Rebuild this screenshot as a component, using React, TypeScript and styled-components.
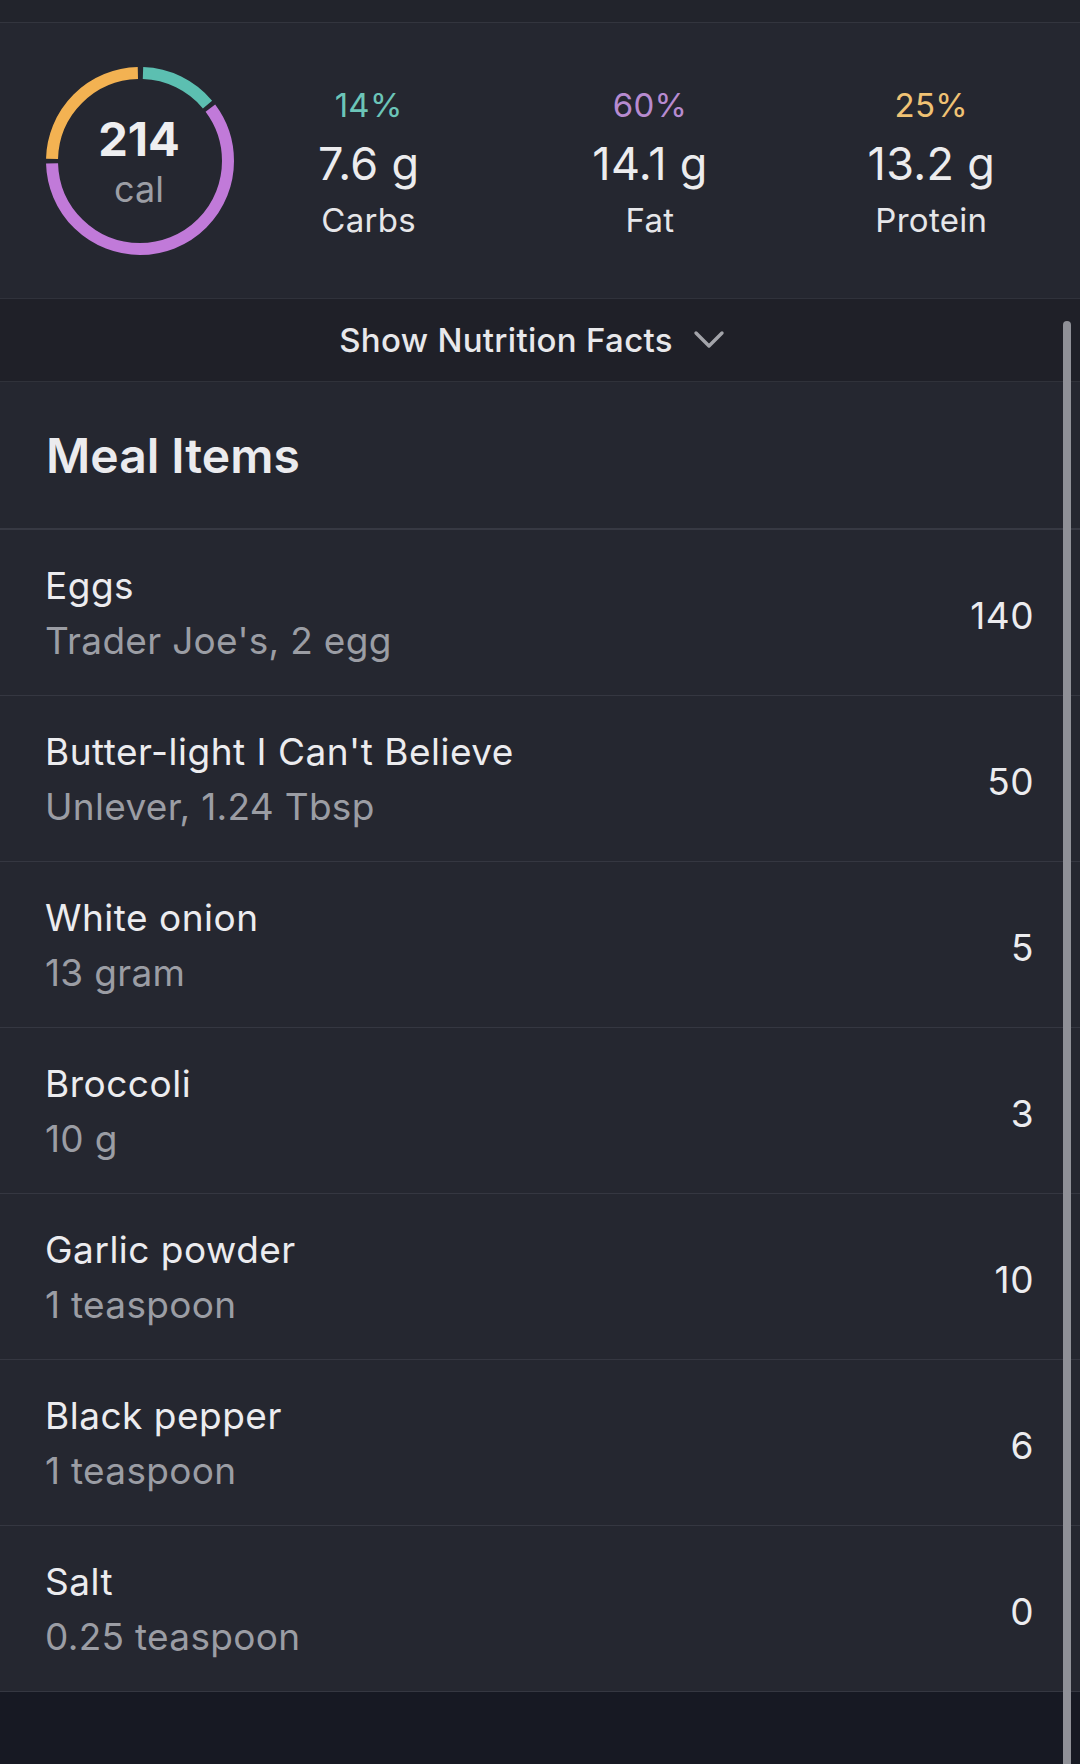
import React from 'react';
import styled, { createGlobalStyle } from 'styled-components';

const GlobalStyle = createGlobalStyle`
  body {
    margin: 0;
    background: #171923;
    font-family: Inter, "Noto Sans", "Liberation Sans", sans-serif;
    -webkit-font-smoothing: antialiased;
  }
`;

const Page = styled.div`
  position: relative;
  width: 1080px;
  min-height: 1764px;
  background: #171923;
  overflow: hidden;
`;

const TopStrip = styled.div`
  height: 22px;
  background: #22242c;
  border-bottom: 1px solid #33353e;
`;

const MacroPanel = styled.div`
  height: 275px;
  display: flex;
  align-items: center;
  padding-left: 40px;
  background: #252730;
  border-bottom: 1px solid #30323b;
`;

const Ring = styled.div`
  position: relative;
  width: 200px;
  height: 200px;
  flex-shrink: 0;
`;

const RingLabel = styled.div`
  position: absolute;
  inset: 0;
  display: flex;
  flex-direction: column;
  align-items: center;
  justify-content: center;
  padding: 4px 2px 0 0;
`;

const Calories = styled.span`
  font-size: 47px;
  font-weight: 700;
  color: #eeeef0;
  line-height: 52px;
`;

const CalUnit = styled.span`
  font-size: 36px;
  color: #9c9ea5;
  line-height: 48px;
`;

const MacroGrid = styled.div`
  flex: 1;
  display: grid;
  grid-template-columns: repeat(3, 1fr);
  margin-left: -12px;
  margin-right: 8px;
`;

const Macro = styled.div`
  display: flex;
  flex-direction: column;
  align-items: center;
`;

const Percent = styled.span<{ $color: string }>`
  font-size: 33px;
  color: ${p => p.$color};
  line-height: 54px;
  letter-spacing: 0.3px;
`;

const Grams = styled.span`
  font-size: 45px;
  color: #ececee;
  line-height: 64px;
  letter-spacing: 0.3px;
`;

const MacroName = styled.span`
  font-size: 33px;
  color: #e6e6e9;
  line-height: 48px;
  letter-spacing: 0.3px;
`;

const NutritionToggle = styled.div`
  height: 82px;
  display: flex;
  align-items: center;
  justify-content: center;
  gap: 20px;
  background: #1f2028;
  border-bottom: 1px solid #30323a;
  padding-right: 16px;
`;

const ToggleText = styled.span`
  font-size: 33px;
  font-weight: 500;
  color: #e8e8eb;
  letter-spacing: 0.3px;
`;

const MealHeader = styled.div`
  height: 146px;
  display: flex;
  align-items: center;
  padding-left: 46px;
  background: #252730;
  border-bottom: 2px solid #373943;
`;

const HeaderTitle = styled.h2`
  margin: 0;
  font-size: 48px;
  font-weight: 600;
  color: #ebebee;
  letter-spacing: 0px;
`;

const Row = styled.div`
  height: 165px;
  display: flex;
  align-items: center;
  justify-content: space-between;
  padding: 0 46px 0 45px;
  background: #252730;
  border-bottom: 1px solid #353741;
`;

const ItemText = styled.div`
  display: flex;
  flex-direction: column;
`;

const ItemName = styled.span`
  font-size: 37px;
  color: #ececef;
  line-height: 55px;
  letter-spacing: 0.5px;
`;

const ItemDetail = styled.span`
  font-size: 37px;
  color: #9b9da4;
  line-height: 55px;
  letter-spacing: 0.3px;
`;

const ItemCalories = styled.span`
  font-size: 37px;
  color: #ececef;
  letter-spacing: 0.5px;
  padding-top: 6px;
`;

const Scrollbar = styled.div`
  position: absolute;
  top: 321px;
  right: 9px;
  bottom: -10px;
  width: 8px;
  border-radius: 4px;
  background: #8f9097;
`;

const R = 88;
const C = 2 * Math.PI * R;

const segments = [
  { from: 2, to: 50, color: '#5cbfb1' },
  { from: 53, to: 268, color: '#c17ad9' },
  { from: 271, to: 358, color: '#f3b252' },
];

const macros = [
  { pct: '14%', grams: '7.6 g', name: 'Carbs', color: '#6cc5b8' },
  { pct: '60%', grams: '14.1 g', name: 'Fat', color: '#b78bd0' },
  { pct: '25%', grams: '13.2 g', name: 'Protein', color: '#f0c274' },
];

const items = [
  { name: 'Eggs', detail: "Trader Joe's, 2 egg", cal: '140' },
  { name: "Butter-light I Can't Believe", detail: 'Unlever, 1.24 Tbsp', cal: '50' },
  { name: 'White onion', detail: '13 gram', cal: '5' },
  { name: 'Broccoli', detail: '10 g', cal: '3' },
  { name: 'Garlic powder', detail: '1 teaspoon', cal: '10' },
  { name: 'Black pepper', detail: '1 teaspoon', cal: '6' },
  { name: 'Salt', detail: '0.25 teaspoon', cal: '0' },
];

const CalorieRing = () => (
  <Ring>
    <svg width="200" height="200" viewBox="0 0 200 200">
      <g transform="rotate(-90 100 100)">
        {segments.map(s => {
          const len = ((s.to - s.from) / 360) * C;
          return (
            <circle
              key={s.color}
              cx="100"
              cy="100"
              r={R}
              fill="none"
              stroke={s.color}
              strokeWidth="12"
              strokeDasharray={`${len} ${C}`}
              strokeDashoffset={-(s.from / 360) * C}
            />
          );
        })}
      </g>
    </svg>
    <RingLabel>
      <Calories>214</Calories>
      <CalUnit>cal</CalUnit>
    </RingLabel>
  </Ring>
);

const App = () => {
  return (
    <Page>
      <GlobalStyle />
      <TopStrip />
      <MacroPanel>
        <CalorieRing />
        <MacroGrid>
          {macros.map(m => (
            <Macro key={m.name}>
              <Percent $color={m.color}>{m.pct}</Percent>
              <Grams>{m.grams}</Grams>
              <MacroName>{m.name}</MacroName>
            </Macro>
          ))}
        </MacroGrid>
      </MacroPanel>
      <NutritionToggle>
        <ToggleText>Show Nutrition Facts</ToggleText>
        <svg width="32" height="22" viewBox="0 0 32 22">
          <path d="M3 4 L16 17 L29 4" fill="none" stroke="#a3a4aa" strokeWidth="3.4" strokeLinecap="round" strokeLinejoin="round" />
        </svg>
      </NutritionToggle>
      <MealHeader>
        <HeaderTitle>Meal Items</HeaderTitle>
      </MealHeader>
      {items.map(it => (
        <Row key={it.name}>
          <ItemText>
            <ItemName>{it.name}</ItemName>
            <ItemDetail>{it.detail}</ItemDetail>
          </ItemText>
          <ItemCalories>{it.cal}</ItemCalories>
        </Row>
      ))}
      <Scrollbar />
    </Page>
  );
};

export default App;
